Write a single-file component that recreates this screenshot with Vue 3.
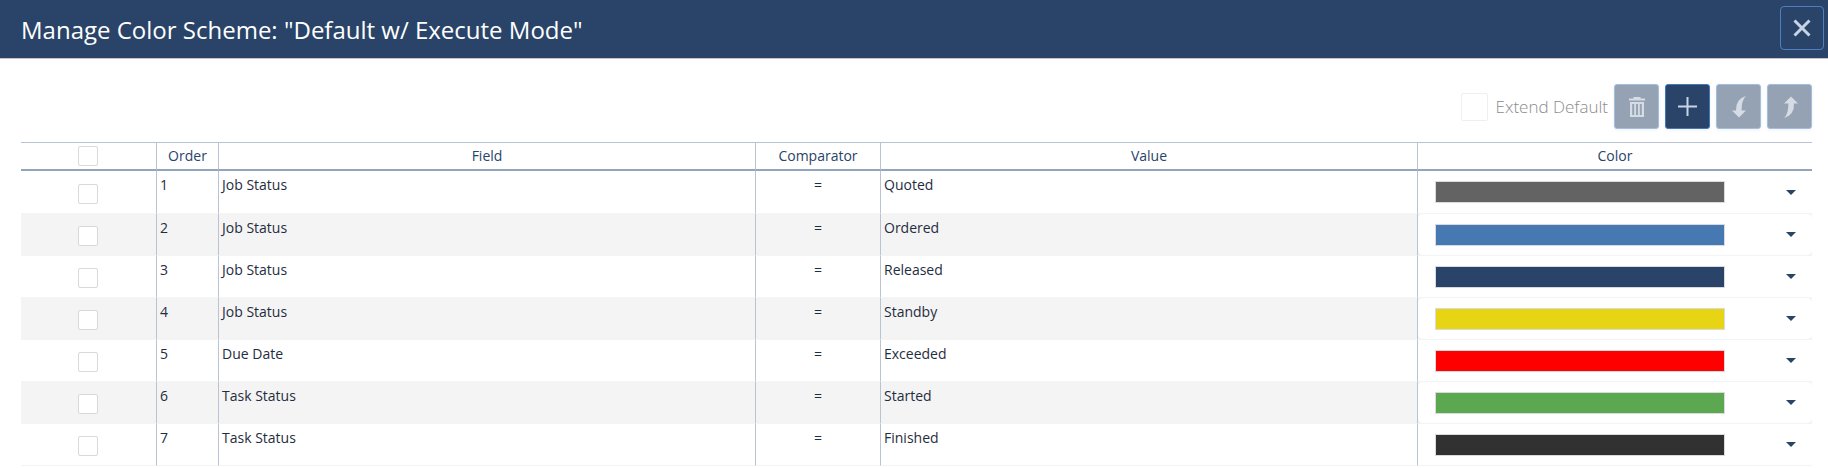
<script setup>
import { ref, computed } from 'vue'

const rules = ref([
  { field: 'Job Status', value: 'Quoted', color: '#636363', selected: false },
  { field: 'Job Status', value: 'Ordered', color: '#4678b2', selected: false },
  { field: 'Job Status', value: 'Released', color: '#294468', selected: false },
  { field: 'Job Status', value: 'Standby', color: '#e6d415', selected: false },
  { field: 'Due Date', value: 'Exceeded', color: '#ff0000', selected: false },
  { field: 'Task Status', value: 'Started', color: '#5ba850', selected: false },
  { field: 'Task Status', value: 'Finished', color: '#313131', selected: false }
])

const allSelected = computed({
  get: () => rules.value.every((r) => r.selected),
  set: (on) => rules.value.forEach((r) => { r.selected = on })
})
</script>

<template>
  <div class="dialog">
    <header class="titlebar">
      <h1>Manage Color Scheme: "Default w/ Execute Mode"</h1>
      <button class="close" type="button" aria-label="Close">
        <svg width="18" height="18" viewBox="0 0 18 18"><path d="M1.5 1.5 16.5 16.5M16.5 1.5 1.5 16.5" /></svg>
      </button>
    </header>

    <main class="content">
      <div class="toolbar">
        <label class="extend">
          <input class="check large" type="checkbox" disabled>
          <span>Extend Default</span>
        </label>
        <button class="tool" type="button" aria-label="Delete" disabled>
          <svg width="22" height="22" viewBox="0 0 22 22">
            <path fill-rule="evenodd" d="M7.5 1h7v1.5H19v2H3v-2h4.5zM4 6h14v15H4zM6.200 8v11h2V8zM10 8v11h2V8zM13.800 8v11h2V8z" />
          </svg>
        </button>
        <button class="tool primary" type="button" aria-label="Add">
          <svg width="21" height="21" viewBox="0 0 21 21"><path d="M9.500 1h2v8.500H20v2H11.500V20h-2v-8.500H1v-2H9.500z" /></svg>
        </button>
        <button class="tool" type="button" aria-label="Move down" disabled>
          <svg width="22" height="22" viewBox="0 0 22 22"><path d="M18 0Q13.500 4 13.600 14.500H18L11 21.500 4 14.500H8Q7.500 3 18 0z" /></svg>
        </button>
        <button class="tool" type="button" aria-label="Move up" disabled>
          <svg width="22" height="22" viewBox="0 0 22 22"><path d="M5 22Q9.500 18 9.400 7.500H5L12 .5 19 7.500H15Q15.500 19 5 22z" /></svg>
        </button>
      </div>

      <table class="grid">
        <colgroup>
          <col class="c-select"><col class="c-order"><col><col class="c-comparator"><col><col class="c-color">
        </colgroup>
        <thead>
          <tr>
            <th class="select"><input v-model="allSelected" class="check" type="checkbox" aria-label="Select all"></th>
            <th scope="col">Order</th>
            <th scope="col">Field</th>
            <th scope="col">Comparator</th>
            <th scope="col">Value</th>
            <th scope="col">Color</th>
          </tr>
        </thead>
        <tbody>
          <tr v-for="(rule, i) in rules" :key="i">
            <td class="select"><input v-model="rule.selected" class="check" type="checkbox" :aria-label="`Select rule ${i + 1}`"></td>
            <td>{{ i + 1 }}</td>
            <td>{{ rule.field }}</td>
            <td class="comparator">=</td>
            <td>{{ rule.value }}</td>
            <td class="color">
              <button class="picker" type="button" aria-haspopup="listbox" :aria-label="`Color for ${rule.value}`">
                <span class="swatch" :style="{ backgroundColor: rule.color }"></span>
                <svg width="10" height="5" viewBox="0 0 10 5"><path d="M0 0h10L5 5z" /></svg>
              </button>
            </td>
          </tr>
        </tbody>
      </table>
    </main>
  </div>
</template>

<style>
body {
  background: #fff;
}
</style>

<style scoped>
.dialog {
  font-family: "Segoe UI", "Open Sans", "Noto Sans", sans-serif;
  color: #1f2d40;
}

.titlebar {
  display: flex;
  align-items: center;
  justify-content: space-between;
  box-sizing: border-box;
  height: 59px;
  padding: 0 4px 2px 21px;
  border-bottom: 1px solid #c4c4c9;
  background: #294468;
}

h1 {
  margin: 0;
  padding-top: 4px;
  color: #fff;
  font-size: 24px;
  font-weight: 400;
  line-height: 32px;
}

button {
  padding: 0;
  font: inherit;
}

.close {
  display: flex;
  align-items: center;
  justify-content: center;
  width: 44px;
  height: 44px;
  border: 1px solid #4d7fc0;
  border-radius: 4px;
  background: transparent;
}

.close path {
  fill: none;
  stroke: #c6d4e8;
  stroke-width: 3;
}

.content {
  padding: 25px 16px 0 21px;
}

.toolbar {
  display: flex;
  align-items: center;
  justify-content: flex-end;
  gap: 6px;
}

.extend {
  display: flex;
  align-items: center;
  gap: 8px;
  color: #8c8c8c;
  font-size: 17px;
  font-weight: 300;
  line-height: 24px;
}

.check {
  appearance: none;
  display: block;
  box-sizing: border-box;
  width: 20px;
  height: 20px;
  margin: 0 auto;
  border: 1px solid #d9d9d9;
  border-radius: 2px;
  background: #fff;
}

.check:checked {
  background: #294468;
}

.check.large {
  width: 27px;
  height: 28px;
  margin: 0;
  border-color: #efefef;
}

.tool {
  display: flex;
  align-items: center;
  justify-content: center;
  width: 45px;
  height: 45px;
  border: 1px solid #a3bfe0;
  border-radius: 3px;
  background: #95a2b4;
  box-shadow: 0 1px 4px rgba(0, 0, 0, 0.06);
}

.tool path {
  fill: #d5dce4;
}

.tool.primary {
  border-color: #4179bd;
  background: #294468;
}

.tool.primary path {
  fill: #c6d4e8;
}

.grid {
  width: 100%;
  margin-top: 13px;
  border-spacing: 0;
  table-layout: fixed;
  font-size: 14px;
  line-height: 20px;
}

.c-select {
  width: 136px;
}

.c-order {
  width: 62px;
}

.c-comparator {
  width: 125px;
}

.c-color {
  width: 394px;
}

th,
td {
  box-sizing: border-box;
  border-right: 1px solid #b9c3d2;
}

th:last-child,
td:last-child {
  border-right: 0;
}

th {
  height: 29px;
  padding: 0;
  border-top: 1px solid #b9c3d2;
  border-bottom: 2px solid #92a5bd;
  color: #294468;
  font-weight: 400;
}

td {
  height: 42px;
  padding: 4px 3px 0;
  border-bottom: 1px solid #f4f4f4;
  vertical-align: top;
}

tbody tr:first-child td {
  height: 43px;
}

tbody tr:nth-child(even) {
  background: #f4f4f4;
}

th.select {
  padding-right: 2px;
}

td.select {
  padding: 3px 2px 0 0;
  vertical-align: middle;
}

.comparator {
  text-align: center;
}

td.color {
  padding: 0;
  vertical-align: middle;
}

.picker {
  display: flex;
  align-items: center;
  box-sizing: border-box;
  width: 100%;
  height: 41px;
  padding: 0 16px 0 17px;
  border: 0;
  border-radius: 5px;
  background: #fff;
}

.swatch {
  box-sizing: border-box;
  flex: 1;
  height: 22px;
  margin-right: 61px;
  border: 1px solid #d9dade;
}

.picker path {
  fill: #294468;
}
</style>
